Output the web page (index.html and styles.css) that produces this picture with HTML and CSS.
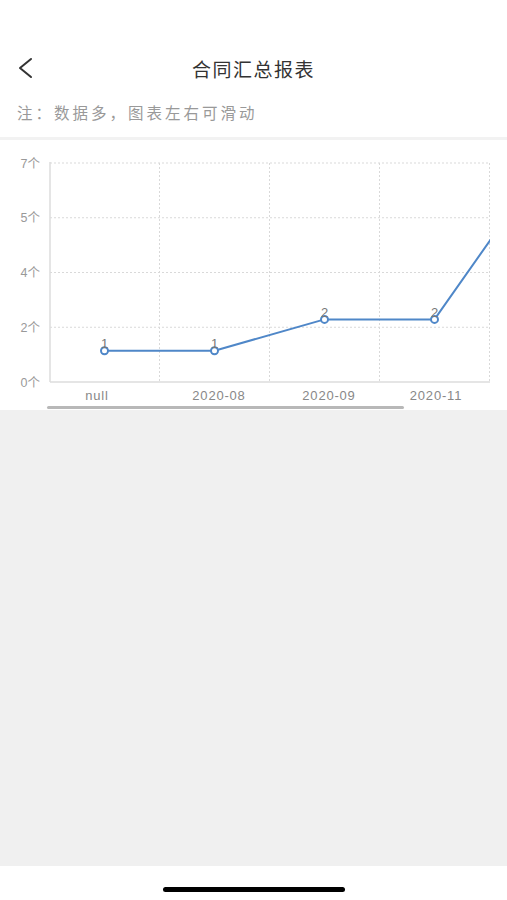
FILE: index.html
```html
<!DOCTYPE html>
<html lang="zh-CN">
<head>
  <meta charset="UTF-8">
  <meta name="viewport" content="width=device-width, initial-scale=1.0">
  <title>合同汇总报表</title>
  <link rel="stylesheet" href="styles.css">
</head>
<body>
  <div class="page">
    <header class="nav">
      <button class="back" type="button" aria-label="返回">
        <svg width="16" height="22" viewBox="0 0 16 22">
          <polyline points="13,2 2,11 13,20" fill="none" stroke="#333" stroke-width="2" stroke-linecap="round" stroke-linejoin="round"/>
        </svg>
      </button>
      <h1>合同汇总报表</h1>
    </header>

    <p class="note">注：数据多，图表左右可滑动</p>

    <section class="chart">
      <svg class="chart-svg" width="507" height="266" viewBox="0 0 507 266">
        <defs>
          <clipPath id="plot">
            <rect x="49" y="0" width="441" height="266"/>
          </clipPath>
        </defs>

        <!-- grid -->
        <g class="grid">
          <line x1="50" y1="23" x2="490" y2="23"/>
          <line x1="50" y1="77.75" x2="490" y2="77.75"/>
          <line x1="50" y1="132.5" x2="490" y2="132.5"/>
          <line x1="50" y1="187.25" x2="490" y2="187.25"/>
          <line x1="159.5" y1="23" x2="159.5" y2="242"/>
          <line x1="269.5" y1="23" x2="269.5" y2="242"/>
          <line x1="379.5" y1="23" x2="379.5" y2="242"/>
          <line x1="489.5" y1="23" x2="489.5" y2="242"/>
        </g>
        <g class="axis">
          <line x1="50" y1="22" x2="50" y2="242"/>
          <line x1="50" y1="242" x2="490" y2="242"/>
        </g>

        <!-- y labels -->
        <g class="ylabel">
          <text x="40" y="27.5">7个</text>
          <text x="40" y="82">5个</text>
          <text x="40" y="137">4个</text>
          <text x="40" y="191.5">2个</text>
          <text x="40" y="246.5">0个</text>
        </g>

        <!-- x labels -->
        <g class="xlabel">
          <text x="97" y="259.5">null</text>
          <text x="219" y="259.5">2020-08</text>
          <text x="329" y="259.5">2020-09</text>
          <text x="436" y="259.5">2020-11</text>
        </g>

        <!-- series -->
        <g clip-path="url(#plot)">
          <polyline class="series" points="104.5,210.7 214.5,210.7 324.5,179.4 434.5,179.4 544.5,23"/>
          <g class="dot">
            <circle cx="104.5" cy="210.7" r="3.5"/>
            <circle cx="214.5" cy="210.7" r="3.5"/>
            <circle cx="324.5" cy="179.4" r="3.5"/>
            <circle cx="434.5" cy="179.4" r="3.5"/>
          </g>
          <g class="value">
            <text x="104.5" y="208">1</text>
            <text x="214.5" y="208">1</text>
            <text x="324.5" y="177">2</text>
            <text x="434.5" y="177">2</text>
          </g>
        </g>
      </svg>
      <div class="scroll-track">
        <div class="scroll-thumb"></div>
      </div>
    </section>

    <div class="rest"></div>

    <footer class="home">
      <span class="home-bar"></span>
    </footer>
  </div>
</body>
</html>
```

FILE: styles.css
```css
body {
  margin: 0;
  padding: 0;
  font-family: "Liberation Sans", "Noto Sans CJK SC", sans-serif;
  background-color: #fff;
}

.page {
  width: 507px;
  height: 900px;
  display: flex;
  flex-direction: column;
}

.nav {
  position: relative;
  height: 48px;
  margin-top: 44px;
  display: flex;
  align-items: center;
  justify-content: center;
}

.nav h1 {
  margin: 0;
  font-size: 19px;
  font-weight: normal;
  letter-spacing: 1.5px;
  color: #333;
}

.back {
  position: absolute;
  left: 18px;
  top: 13px;
  padding: 0;
  border: none;
  background: none;
  line-height: 0;
}

.note {
  margin: 0;
  height: 45px;
  padding-left: 17px;
  line-height: 44px;
  font-size: 15.5px;
  letter-spacing: 3px;
  color: #999;
  border-bottom: 3px solid #f2f2f2;
}

.chart {
  height: 270px;
  background-color: #fff;
}

.chart-svg {
  display: block;
}

.grid line {
  stroke: #d9d9d9;
  stroke-width: 1;
  stroke-dasharray: 2 2;
}

.axis line {
  stroke: #dcdcdc;
  stroke-width: 1.5;
}

.ylabel text {
  font-size: 12.5px;
  fill: #999;
  text-anchor: end;
}

.xlabel text {
  font-size: 13px;
  letter-spacing: 0.8px;
  fill: #888;
  text-anchor: middle;
}

.series {
  fill: none;
  stroke: #4f87c8;
  stroke-width: 2;
  stroke-linejoin: round;
}

.dot circle {
  fill: #fff;
  stroke: #4f87c8;
  stroke-width: 2;
}

.value text {
  font-size: 13px;
  fill: #777;
  text-anchor: middle;
}

.scroll-track {
  height: 4px;
  padding-left: 47px;
}

.scroll-thumb {
  width: 357px;
  height: 3px;
  border-radius: 2px;
  background-color: #b8b8b8;
}

.rest {
  flex: 1;
  background-color: #f0f0f0;
}

.home {
  height: 34px;
  display: flex;
  justify-content: center;
  align-items: flex-end;
  background-color: #fff;
}

.home-bar {
  width: 182px;
  height: 5px;
  margin-bottom: 8px;
  border-radius: 3px;
  background-color: #000;
}
```
